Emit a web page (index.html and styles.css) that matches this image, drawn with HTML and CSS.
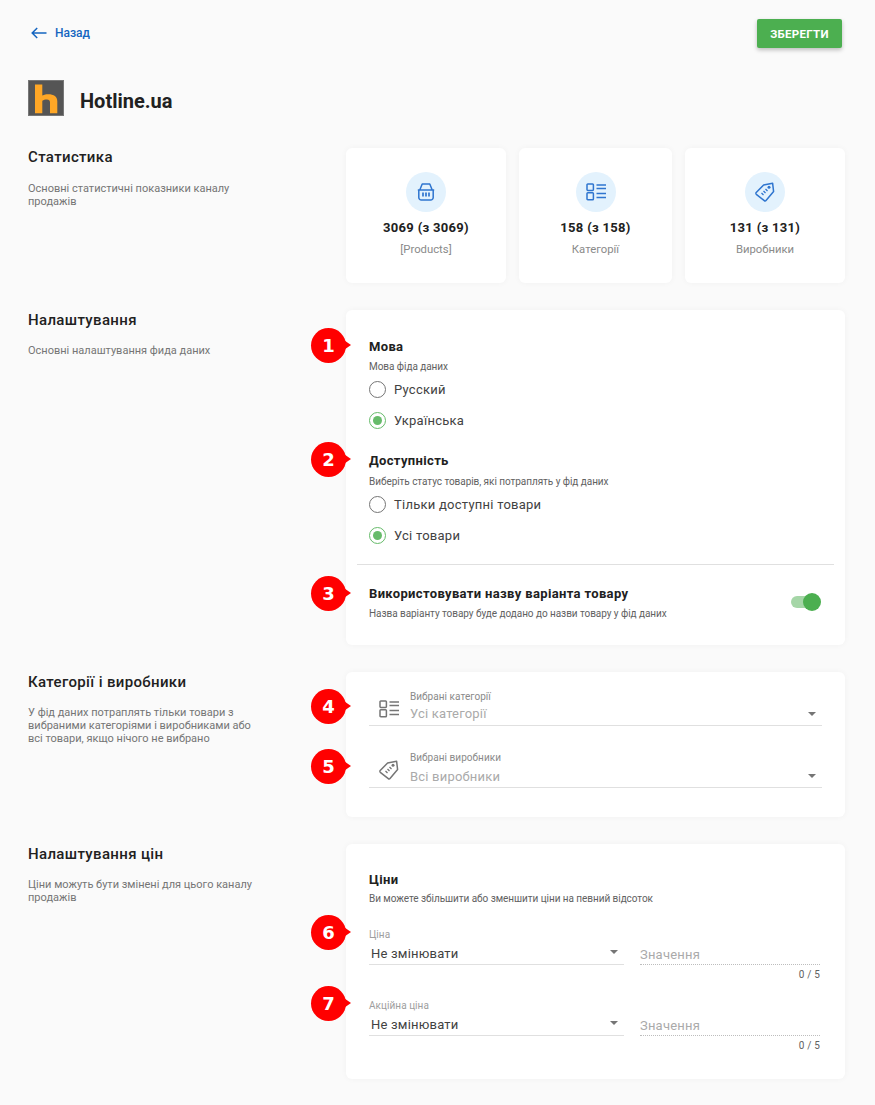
FILE: index.html
```html
<!DOCTYPE html>
<html lang="uk">
<head>
<meta charset="utf-8">
<title>Hotline.ua</title>
<link rel="stylesheet" href="styles.css">
</head>
<body>
<svg class="defs" width="0" height="0" aria-hidden="true">
  <defs>
    <symbol id="i-list" viewBox="0 0 20 18">
      <g fill="none" stroke="currentColor" stroke-width="1.5">
        <rect x="1" y="1" width="6.400" height="6.400" rx=".8"/>
        <rect x="1" y="9.800" width="6.400" height="7" rx=".8"/>
        <path d="M10.500 2H20M10.500 5.500H20M10.500 10.500H20M10.500 14.500H20"/>
      </g>
    </symbol>
    <symbol id="i-tag" viewBox="0 0 20 20">
      <g fill="none" stroke="currentColor" stroke-width="1.5" stroke-linejoin="round">
        <path d="M1.200 10.600 8.600 3l9-1.800 1 8.400-7.600 8.900a1.200 1.200 0 0 1-1.700.1L1.300 12.300a1.200 1.200 0 0 1-.1-1.700Z"/>
        <path d="M6.500 11l2 2M8.500 9l2 2M10.500 7l2 2" stroke-width="1.300"/>
      </g>
      <circle cx="14" cy="5.200" r="1.500" fill="currentColor"/>
    </symbol>
  </defs>
</svg>
<main class="page">
  <header class="topbar">
    <a class="back" href="#">
      <svg class="back-arrow" viewBox="0 0 16 12" width="16" height="12"><path d="M15.500 6H1.500M6.200 1 1.200 6l5 5" fill="none" stroke="currentColor" stroke-width="1.500"/></svg>
      <span>Назад</span>
    </a>
    <button class="save" type="button">Зберегти</button>
  </header>

  <div class="brand">
    <svg class="logo" viewBox="0 0 36 36" width="36" height="36">
      <rect x=".5" y=".5" width="35" height="35" fill="#555" stroke="#777"/>
      <path d="M7 4.500 14.300 4.500V15.500C16.500 14.500 18 14.200 20 14.200 26 14.200 29.300 16.500 29.300 21.500V33.300H22V22.500C22 20.500 21 19.500 19 19.500 17 19.500 15.500 20 14.300 20.800V33.300H7Z" fill="#ffa726"/>
    </svg>
    <h1 class="brand-name">Hotline.ua</h1>
  </div>

  <section class="section sec-stats">
    <div class="intro">
      <h2>Статистика</h2>
      <p>Основні статистичні показники каналу продажів</p>
    </div>
    <div class="stats">
      <div class="card stat">
        <span class="stat-icon">
          <svg viewBox="0 0 18 18" width="18" height="18"><g fill="none" stroke="currentColor" stroke-width="1.500" stroke-linejoin="round"><path d="M.8 7h16.400M2.800 7 5.200 1h7.600l2.400 6M1.800 7v7.500A2.500 2.500 0 0 0 4.300 17h9.400a2.500 2.500 0 0 0 2.500-2.500V7"/><path d="M6 9.500v4M9 9.500v4M12 9.500v4" stroke-width="1.700"/></g></svg>
        </span>
        <strong>3069 (з 3069)</strong>
        <span class="stat-label">[Products]</span>
      </div>
      <div class="card stat">
        <span class="stat-icon"><svg width="20" height="18"><use href="#i-list"/></svg></span>
        <strong>158 (з 158)</strong>
        <span class="stat-label">Категорії</span>
      </div>
      <div class="card stat">
        <span class="stat-icon"><svg width="20" height="20"><use href="#i-tag"/></svg></span>
        <strong>131 (з 131)</strong>
        <span class="stat-label">Виробники</span>
      </div>
    </div>
  </section>

  <section class="section">
    <div class="intro">
      <h2>Налаштування</h2>
      <p>Основні налаштування фида даних</p>
    </div>
    <div class="card settings">
      <div class="group lang">
        <span class="badge">1</span>
        <h3>Мова</h3>
        <p class="hint">Мова фіда даних</p>
        <label class="radio"><span class="dot"></span>Русский</label>
        <label class="radio on"><span class="dot"></span>Українська</label>
      </div>
      <div class="group avail">
        <span class="badge">2</span>
        <h3>Доступність</h3>
        <p class="hint">Виберіть статус товарів, які потраплять у фід даних</p>
        <label class="radio"><span class="dot"></span>Тільки доступні товари</label>
        <label class="radio on"><span class="dot"></span>Усі товари</label>
      </div>
      <hr class="rule">
      <div class="group variant">
        <span class="badge">3</span>
        <div>
          <h3>Використовувати назву варіанта товару</h3>
          <p class="hint">Назва варіанту товару буде додано до назви товару у фід даних</p>
        </div>
        <span class="switch"></span>
      </div>
    </div>
  </section>

  <section class="section">
    <div class="intro">
      <h2>Категорії і виробники</h2>
      <p>У фід даних потраплять тільки товари з вибраними категоріями і виробниками або всі товари, якщо нічого не вибрано</p>
    </div>
    <div class="card filters">
      <div class="picker">
        <span class="badge">4</span>
        <svg class="picker-icon" width="20" height="18"><use href="#i-list"/></svg>
        <div class="picker-body">
          <span class="float">Вибрані категорії</span>
          <span class="ph">Усі категорії</span>
        </div>
        <span class="caret"></span>
      </div>
      <div class="picker">
        <span class="badge">5</span>
        <svg class="picker-icon" width="20" height="20"><use href="#i-tag"/></svg>
        <div class="picker-body">
          <span class="float">Вибрані виробники</span>
          <span class="ph">Всі виробники</span>
        </div>
        <span class="caret"></span>
      </div>
    </div>
  </section>

  <section class="section">
    <div class="intro">
      <h2>Налаштування цін</h2>
      <p>Ціни можуть бути змінені для цього каналу продажів</p>
    </div>
    <div class="card prices">
      <h3>Ціни</h3>
      <p class="hint">Ви можете збільшити або зменшити ціни на певний відсоток</p>
      <div class="price-row">
        <span class="badge">6</span>
        <div class="price-select">
          <span class="float">Ціна</span>
          <div class="select-line"><span>Не змінювати</span><span class="caret"></span></div>
        </div>
        <div class="price-value">
          <span class="ph">Значення</span>
          <span class="count">0 / 5</span>
        </div>
      </div>
      <div class="price-row">
        <span class="badge">7</span>
        <div class="price-select">
          <span class="float">Акційна ціна</span>
          <div class="select-line"><span>Не змінювати</span><span class="caret"></span></div>
        </div>
        <div class="price-value">
          <span class="ph">Значення</span>
          <span class="count">0 / 5</span>
        </div>
      </div>
    </div>
  </section>
</main>
</body>
</html>
```
FILE: styles.css
```css
* { box-sizing: border-box; }
html, body { margin: 0; padding: 0; }
body {
  background: #fafafa;
  color: #212121;
  font-family: Roboto, "Liberation Sans", sans-serif;
  font-size: 14px;
}
.defs { position: absolute; }
h1, h2, h3, p { margin: 0; }

.page { padding: 19px 30px 26px 28px; }

.topbar { display: flex; justify-content: space-between; align-items: center; height: 29px; padding-left: 3px; padding-right: 3px; }
.back { display: flex; align-items: center; gap: 8px; padding-bottom: 2px; color: #1565c0; font-size: 12px; font-weight: 500; text-decoration: none; }
.back-arrow { display: block; }
.save {
  width: 85px; height: 29px; border: 0; border-radius: 2px; padding: 0;
  background: #4caf50; color: #fff;
  font: 700 11.5px Roboto, sans-serif; letter-spacing: .3px; text-transform: uppercase;
  box-shadow: 0 2px 4px rgba(0,0,0,.25);
}

.brand { display: flex; align-items: center; gap: 16px; margin-top: 32px; }
.logo { display: block; }
.brand-name { padding-top: 6px; font-size: 20px; font-weight: 700; color: #212121; }

.section { display: grid; grid-template-columns: 318px 499px; margin-bottom: 27px; }
.sec-stats { margin-top: 32px; }
.intro { width: 226px; padding-top: 1px; }
.sec-stats .intro { padding-top: 0; }
.intro h2 { font-size: 15px; font-weight: 500; line-height: 18px; letter-spacing: .35px; color: #212121; }
.intro p { margin-top: 15px; font-size: 11px; line-height: 13px; color: #757575; }
.sec-stats .intro p { margin-top: 16px; }

.card { background: #fff; border-radius: 6px; box-shadow: 0 0 6px rgba(0,0,0,.04); }

.stats { display: grid; grid-template-columns: 160px 153px 160px; gap: 13px; }
.stat { display: flex; flex-direction: column; align-items: center; height: 135px; padding-top: 24px; }
.stat-icon { display: flex; align-items: center; justify-content: center; width: 40px; height: 40px; border-radius: 50%; background: #e3f2fd; color: #2f75cf; }
.stat strong { margin-top: 8px; font-size: 13px; line-height: 16px; font-weight: 700; letter-spacing: .3px; color: #212121; }
.stat-label { margin-top: 7px; font-size: 11.3px; line-height: 14px; color: #8a8a8a; }

.badge {
  position: absolute; left: -46px; top: -11px;
  width: 35px; height: 35px; border-radius: 50%;
  background: #f00; color: #fff;
  display: flex; align-items: center; justify-content: center;
  font: 700 18px "DejaVu Sans", sans-serif;
}
.badge::after {
  content: ""; position: absolute; left: 30px; top: 10px;
  border-left: 10px solid #f00; border-top: 7.5px solid transparent; border-bottom: 7.5px solid transparent;
}

.settings { height: 335px; padding: 29px 11px 0 11px; }
.group { position: relative; padding-left: 12px; }
.group h3, .prices h3 { font-size: 13px; line-height: 16px; font-weight: 700; color: #212121; letter-spacing: .35px; }
.hint { margin-top: 6px; font-size: 10px; line-height: 12px; letter-spacing: -.05px; color: #616161; }
.radio { display: flex; align-items: center; height: 31px; gap: 8px; font-size: 13px; color: #424242; letter-spacing: .25px; }
.lang .radio:first-of-type, .avail .radio:first-of-type { margin-top: 1px; }
.dot { flex: none; width: 17px; height: 17px; border-radius: 50%; border: 1.5px solid #757575; position: relative; }
.on .dot { border-color: #66bb6a; }
.on .dot::after { content: ""; position: absolute; left: 2.5px; top: 2.5px; width: 9px; height: 9px; border-radius: 50%; background: #66bb6a; }
.avail { margin-top: 17px; }
.avail .hint { margin-top: 7px; }
.rule { border: 0; border-top: 1px solid #e0e0e0; margin: 13px 0 0; }
.variant { display: flex; justify-content: space-between; align-items: flex-start; padding-top: 21px; padding-right: 15px; }
.variant .badge { top: 11px; }
.switch { position: relative; display: block; width: 28px; height: 12px; margin-top: 10px; border-radius: 6px; background: #a5d6a7; }
.switch::after { content: ""; position: absolute; right: -2px; top: -3px; width: 18px; height: 18px; border-radius: 50%; background: #4caf50; }

.filters { height: 145px; padding: 16px 23px 0; }
.picker { position: relative; display: flex; align-items: flex-end; height: 38px; border-bottom: 1px solid #e0e0e0; margin-bottom: 24px; }
.picker:last-child { margin-bottom: 0; }
.picker .badge { left: -58px; top: 1px; }
.picker + .picker .badge { top: -1px; }
.picker-icon { color: #757575; margin: 0 11px 7px 10px; flex: none; }
.picker-body { display: flex; flex-direction: column; flex: 1; padding-bottom: 2px; }
.picker + .picker .picker-body { padding-bottom: 1px; }
.float { font-size: 10px; line-height: 12px; letter-spacing: .05px; color: #8a8a8a; }
.ph { font-size: 13px; line-height: 18px; color: #aaa; letter-spacing: .2px; margin-top: 2px; }
.picker + .picker .ph { margin-top: 4px; }
.caret { width: 0; height: 0; border-top: 4px solid #757575; border-left: 4.5px solid transparent; border-right: 4.5px solid transparent; margin: 0 6px 9px 0; }

.prices { height: 235px; padding: 28px 25px 0 23px; }
.prices .hint { margin-top: 5px; }
.price-row { position: relative; display: grid; grid-template-columns: 255px 180px; column-gap: 16px; height: 71px; }
.prices .price-row:first-of-type { margin-top: 24px; }
.price-row .badge { left: -58px; top: -14px; }
.price-row .float { display: block; color: #9e9e9e; }
.select-line { display: flex; justify-content: space-between; align-items: center; height: 21px; padding: 0 0 2px 2px; border-bottom: 1px solid #e0e0e0; font-size: 13px; letter-spacing: .2px; color: #424242; margin-top: 3px; }
.select-line .caret { margin: 0 6px 3px 0; }
.price-value { display: flex; flex-direction: column; padding-top: 17px; }
.price-value .ph { margin: 0; line-height: 17px; padding-bottom: 1px; border-bottom: 1px dotted #bdbdbd; }
.count { align-self: flex-end; margin-top: 4px; font-size: 10px; line-height: 12px; color: #616161; letter-spacing: .2px; }
```
